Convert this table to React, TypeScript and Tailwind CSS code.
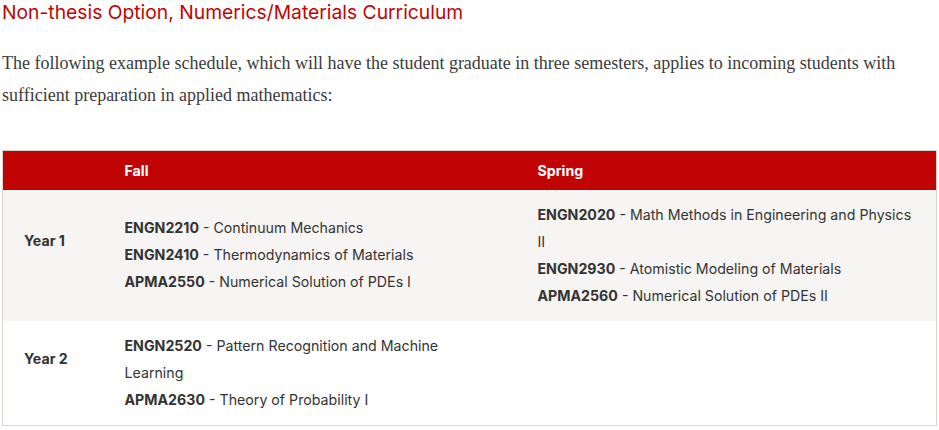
import React from "react";

interface Course {
  code: string;
  title: string;
}

interface YearRow {
  label: string;
  fall: Course[];
  spring: Course[];
}

const rows: YearRow[] = [
  {
    label: "Year 1",
    fall: [
      { code: "ENGN2210", title: "Continuum Mechanics" },
      { code: "ENGN2410", title: "Thermodynamics of Materials" },
      { code: "APMA2550", title: "Numerical Solution of PDEs I" },
    ],
    spring: [
      { code: "ENGN2020", title: "Math Methods in Engineering and Physics II" },
      { code: "ENGN2930", title: "Atomistic Modeling of Materials" },
      { code: "APMA2560", title: "Numerical Solution of PDEs II" },
    ],
  },
  {
    label: "Year 2",
    fall: [
      { code: "ENGN2520", title: "Pattern Recognition and Machine Learning" },
      { code: "APMA2630", title: "Theory of Probability I" },
    ],
    spring: [],
  },
];

const CourseList: React.FC<{ courses: Course[] }> = ({ courses }) => (
  <>
    {courses.map((c) => (
      <div key={c.code}>
        <span className="font-bold">{c.code}</span> - {c.title}
      </div>
    ))}
  </>
);

const App: React.FC = () => {
  return (
    <div className="min-h-[430px] bg-white px-[2px]">
      <h2
        className="text-[19.3px] leading-[24px] text-[#c00404]"
        style={{ fontFamily: "Inter, 'Liberation Sans', sans-serif" }}
      >
        Non-thesis Option, Numerics/Materials Curriculum
      </h2>
      <p
        className="mt-[23px] text-[18px] leading-[32px] text-[#3b3b3b]"
        style={{ fontFamily: "'Liberation Serif', serif" }}
      >
        The following example schedule, which will have the student graduate in
        three semesters, applies to incoming students with sufficient
        preparation in applied mathematics:
      </p>
      <table
        className="mt-[39px] w-[935px] border border-[#d8d3cc] border-collapse text-[14.2px] leading-[27px] text-[#333]"
        style={{ fontFamily: "Inter, 'Liberation Sans', sans-serif" }}
      >
        <thead>
          <tr className="bg-[#c00404] text-white h-[39px]">
            <th className="w-[101px]" />
            <th className="w-[413px] px-[21px] text-left font-bold">Fall</th>
            <th className="px-[21px] text-left font-bold">Spring</th>
          </tr>
        </thead>
        <tbody>
          {rows.map((r, i) => (
            <tr key={r.label} className={i % 2 === 0 ? "bg-[#f7f5f3]" : "bg-white"}>
              <td className="px-[21px] pt-[11px] pb-[40px] align-middle font-bold">
                {r.label}
              </td>
              <td className="px-[21px] pt-[11px] pb-[12px] align-middle">
                <CourseList courses={r.fall} />
              </td>
              <td className="px-[21px] pt-[11px] pb-[12px] align-middle">
                <CourseList courses={r.spring} />
              </td>
            </tr>
          ))}
        </tbody>
      </table>
    </div>
  );
};

export default App;
